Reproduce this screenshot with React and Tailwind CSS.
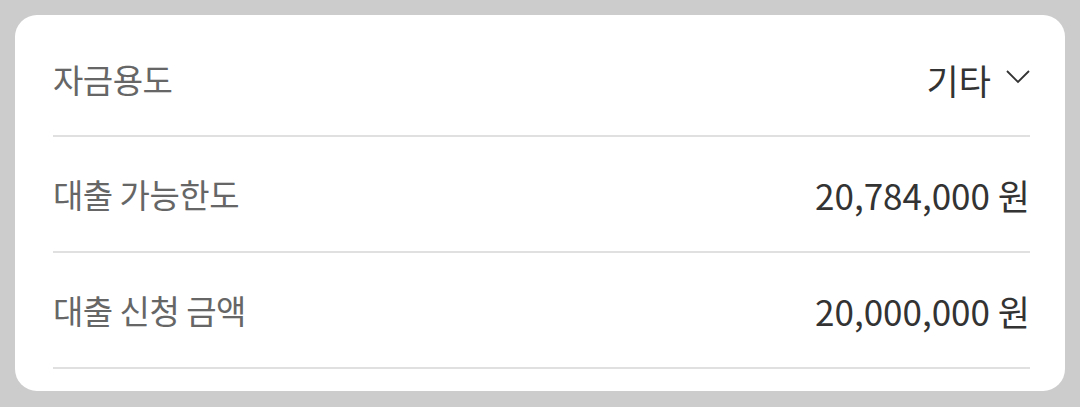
const rows = [
  { label: "대출 가능한도", value: "20,784,000 원" },
  { label: "대출 신청 금액", value: "20,000,000 원" },
];

const font = { fontFamily: '"Noto Sans CJK KR", "Noto Sans", sans-serif' };

export default function App() {
  return (
    <div className="w-[1080px] h-[407px] bg-[#cccccc] pt-[15px] px-[15px]" style={font}>
      <div className="bg-white rounded-[22px] h-[376px] pt-[6px] pl-[38px] pr-[35px]">
        <div className="flex items-center justify-between h-[116px] pt-[4px] border-b-2 border-[#e0e0e0]">
          <span className="text-[33px] text-[#666666] tracking-[-0.5px]">자금용도</span>
          <span className="flex items-center text-[35px] text-[#333333]">
            기타
            <svg width="24" height="16" viewBox="0 0 24 16" className="ml-[15px] mb-[6px]" fill="none">
              <path d="M1 2 L12 13 L23 2" stroke="#333" strokeWidth="1.8" />
            </svg>
          </span>
        </div>
        {rows.map((r) => (
          <div key={r.label} className="flex items-center justify-between h-[116px] pt-[2px] border-b-2 border-[#e0e0e0]">
            <span className="text-[33px] text-[#666666] tracking-[-0.5px]">{r.label}</span>
            <span className="text-[35px] text-[#333333]">{r.value}</span>
          </div>
        ))}
      </div>
    </div>
  );
}
